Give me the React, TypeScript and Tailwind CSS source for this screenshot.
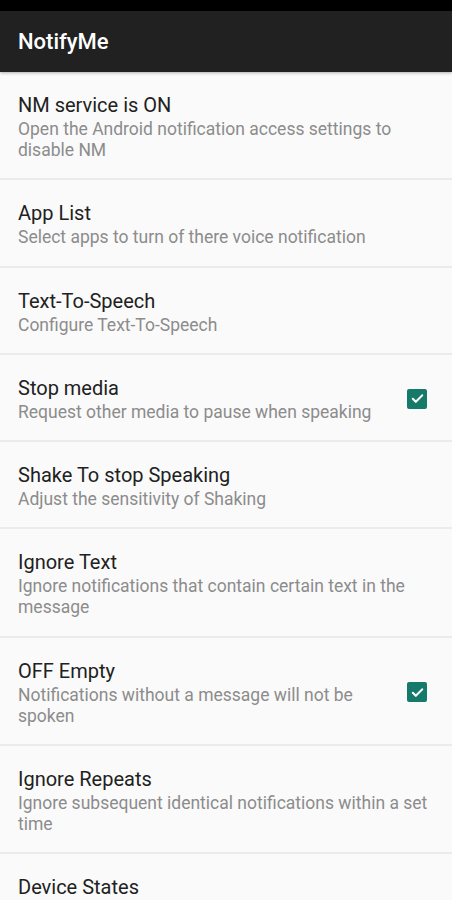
import React from 'react'

interface PrefItem {
  title: string
  summary?: string
  checked?: boolean
}

const items: PrefItem[] = [
  { title: 'NM service is ON', summary: 'Open the Android notification access settings to disable NM' },
  { title: 'App List', summary: 'Select apps to turn of there voice notification' },
  { title: 'Text-To-Speech', summary: 'Configure Text-To-Speech' },
  { title: 'Stop media', summary: 'Request other media to pause when speaking', checked: true },
  { title: 'Shake To stop Speaking', summary: 'Adjust the sensitivity of Shaking' },
  { title: 'Ignore Text', summary: 'Ignore notifications that contain certain text in the message' },
  { title: 'OFF Empty', summary: 'Notifications without a message will not be spoken', checked: true },
  { title: 'Ignore Repeats', summary: 'Ignore subsequent identical notifications within a set time' },
  { title: 'Device States' },
]

function CheckBox() {
  return (
    <div className="ml-[20px] mr-[7px] w-[20px] h-[20px] rounded-[2px] bg-[#167a6b] flex items-center justify-center shrink-0">
      <svg width="15" height="15" viewBox="0 0 24 24" fill="none" stroke="white" strokeWidth="3.4" strokeLinecap="round" strokeLinejoin="round">
        <path d="M4.5 12.5l4.8 4.8L19.5 7" />
      </svg>
    </div>
  )
}

export default function App() {
  return (
    <div className="w-[452px] h-[900px] overflow-hidden bg-[#fafafa] font-['Roboto',sans-serif]">
      {/* status bar */}
      <div className="h-[11px] bg-black" />
      <div className="h-[61px] bg-[#212121] flex items-center px-[18px] shadow-[0_1px_3px_rgba(0,0,0,0.3)]">
        <span className="text-white text-[22px] font-medium">NotifyMe</span>
      </div>

      <div>
        {items.map((item, i) => (
          <div
            key={i}
            className="flex items-center pl-[18px] pr-[18px] pt-[20px] pb-[17.3px] border-b-[2px] border-[#ebebeb]"
          >
            <div className="flex-1 min-w-0">
              <div className="text-[20px] leading-[26px] text-[#212121]">{item.title}</div>
              {item.summary && (
                <div className="mt-[1px] text-[17.5px] leading-[21px] text-[#8c8c8c]">{item.summary}</div>
              )}
            </div>
            {item.checked && <CheckBox />}
          </div>
        ))}
      </div>
    </div>
  )
}
